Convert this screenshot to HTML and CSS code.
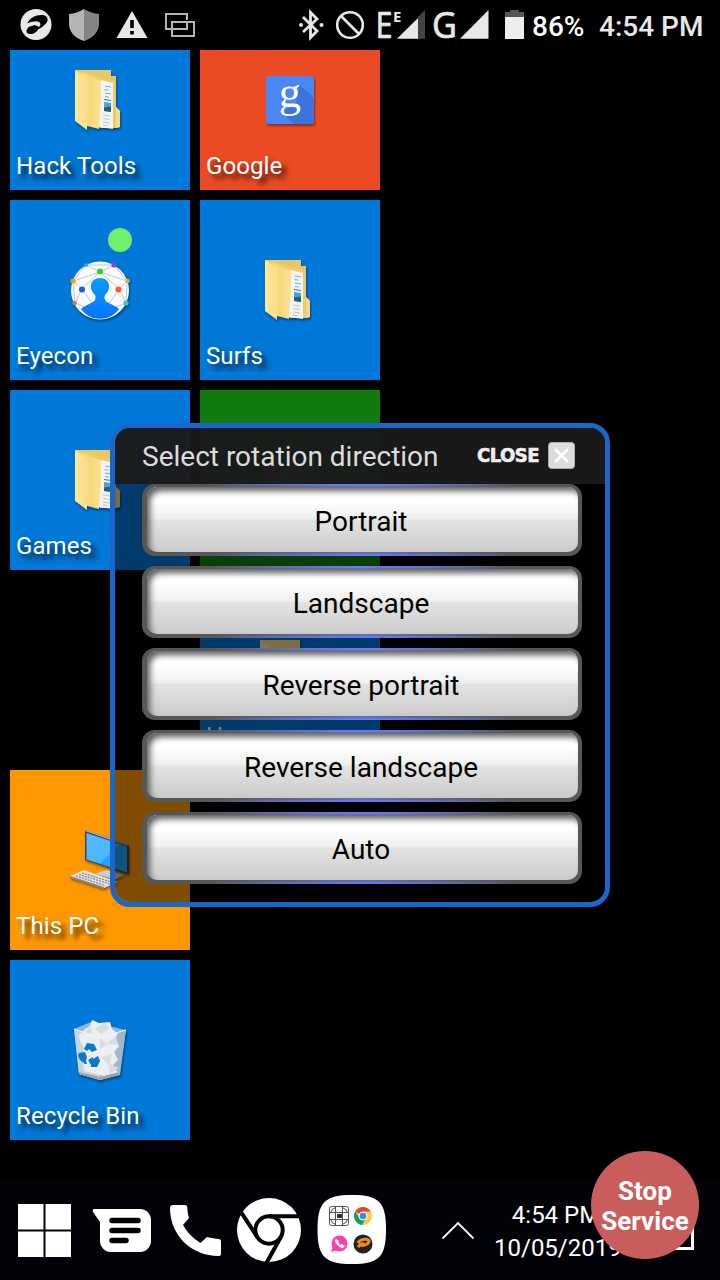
FILE: index.html
```html
<!doctype html>
<html lang="en">
<head>
    <meta charset="UTF-8">
    <meta name="viewport" content="width=device-width, initial-scale=1.0">
    <title>Launcher</title>
    <link rel="stylesheet" href="styles.css">
</head>
<body>

<!-- shared icons -->
<svg class="defs">
    <defs>
        <linearGradient id="fold" x1="0" x2="1"><stop offset="0" stop-color="#f7d97f"/><stop offset=".5" stop-color="#f6d87c"/><stop offset="1" stop-color="#ffe394"/></linearGradient>
        <linearGradient id="flap" x1="0" x2="1"><stop offset="0" stop-color="#ffe69a"/><stop offset="1" stop-color="#fbdd85"/></linearGradient>
        <linearGradient id="screen" x1="0" x2="1" y2="1"><stop offset="0" stop-color="#56bdff"/><stop offset=".55" stop-color="#4ab6ff"/><stop offset=".56" stop-color="#22a4fb"/><stop offset="1" stop-color="#2aa8fd"/></linearGradient>
        <linearGradient id="man" x2="0" y2="1"><stop offset="0" stop-color="#0a9cff"/><stop offset="1" stop-color="#0573fb"/></linearGradient>
        <symbol id="folder" viewBox="0 0 60 60">
            <path d="M5 0h36v6h5v31l4 4v16l-4 1H30z" fill="#edcb6d"/>
            <path d="M5 0h36v6h5v5L12 2z" fill="#e9c766"/>
            <path d="M46 37l4 4v16l-4 1z" fill="#f9da80"/>
            <path d="M31 10l12 3v46l-14-2z" fill="#f3f3f3"/>
            <path d="M35 16l6 1M34.500 19.500l4 .6M35 23l6 1M35 26.500l4 .6" stroke="#64b4e4" stroke-width="1"/>
            <path d="M34 29.500l7 1" stroke="#2277b8" stroke-width="1"/>
            <path d="M34 32l7 1v9l-7-1z" fill="#4ba3d4"/>
            <path d="M34 37.500l7-1V42l-7-1z" fill="#2b5f70"/>
            <path d="M33 45l7 1M33.500 48.500l6 1M33 52l7 1M33 55l5 .8" stroke="#c4c4c4" stroke-width="1"/>
            <path d="M12 2l19 9v25l-2 5v18l-16-4z" fill="url(#fold)"/>
            <path d="M5 0l13 9v30l-1 4v17L5 51z" fill="url(#flap)"/>
        </symbol>
    </defs>
</svg>

<div id="status">
    <svg class="st-left" width="180" height="34" viewBox="18 8 180 34">
        <circle cx="36" cy="24.500" r="15.500" fill="#e8e8e8"/>
        <path d="M27.500 23.500c2-6 9-9 15-8.500 7 1 6 7 2 10-4 4-8 5-10 5 2-2 6-3 6-6-1-4-8-3-13-.5z" fill="#000"/>
        <ellipse cx="32.500" cy="29.500" rx="6.500" ry="4" transform="rotate(-25 32.500 29.500)" fill="#000"/>
        <path d="M29 27c3-4 8-5 11-4 0 2-2 3-3 3-1-1-4-1-8 1z" fill="#e8e8e8"/>
        <path d="M84 9c-5 3-10 4.500-15 5v10c0 8 6 14 15 17z" fill="#b4b4b4"/>
        <path d="M84 9c5 3 10 4.500 15 5v10c0 8-6 14-15 17z" fill="#848484"/>
        <path d="M132 11l15.500 27h-31z" fill="#e8e8e8"/>
        <path d="M130.200 20h3.600v8h-3.600zM130.200 31h3.600v3.500h-3.600z" fill="#000"/>
        <path d="M174 29h-8V14h21v6M183 29h4v-7M172 22h22v14h-22zM174 29h9" fill="none" stroke="#b4b4b4" stroke-width="2"/>
    </svg>
    <svg class="st-right" width="228" height="50" viewBox="297 0 228 50">
        <path d="M303 17l14 14-6.500 6.500V12.500L317 19l-14 13" fill="none" stroke="#e8e8e8" stroke-width="2.800"/>
        <circle cx="301" cy="25" r="2" fill="#e8e8e8"/><circle cx="321.500" cy="25" r="2" fill="#e8e8e8"/>
        <circle cx="350" cy="25" r="12.800" fill="none" stroke="#e8e8e8" stroke-width="2.600"/>
        <path d="M341 16l18 18" stroke="#e8e8e8" stroke-width="2.600"/>
        <text x="375.500" y="38" class="net" textLength="17" lengthAdjust="spacingAndGlyphs">E</text>
        <text x="393" y="22" class="net-s">E</text>
        <path d="M418 18v20.800h-21z" fill="#e8e8e8"/><path d="M425 10v28.800h-7V17z" fill="#444"/>
        <text x="432" y="38" class="net" textLength="25" lengthAdjust="spacingAndGlyphs">G</text>
        <path d="M488.500 10v28.800H460z" fill="#e8e8e8"/>
        <path d="M505 17v-5h5v-2h9v2h5v5z" fill="#555"/><path d="M505 17h19v22h-19z" fill="#eee"/>
    </svg>
    <span class="battery">86%</span>
    <span class="time">4:54 PM</span>
</div>

<div id="desk">
    <div class="tile short">
        <svg class="icon"><use href="#folder"/></svg>
        <span>Hack Tools</span>
    </div>
    <div class="tile short red">
        <svg class="icon" viewBox="0 0 60 60">
            <rect x="6" y="6" width="48" height="48" rx="3" fill="#4a86f4"/>
            <path d="M40 15l14 13v26H34L23 43l13-11z" fill="#3d74dc"/>
            <text x="30" y="37" class="g">g</text>
        </svg>
        <span>Google</span>
    </div>
    <div class="tile">
        <i class="dot"></i>
        <svg class="icon" viewBox="0 0 60 60">
            <circle cx="30" cy="30.500" r="29" fill="#fafafc"/>
            <path d="M16 5h28M16 5L3 21M16 5l14 7M44 5L30 12M44 5l13 16M30 12L3 21M30 12l27 9M30 12L12 29M30 12l19 17M3 21l9 8M57 21l-8 8M12 29L5 43M12 29l14 20M49 29l7 14M49 29L36 48M5 43l10 4M56 43l-10 4M3 21l2 22M57 21l-1 22" fill="none" stroke="#bfc1cb" stroke-width=".9"/>
            <path d="M11 49c3-3 7-4 10-6 5-2 5-5 4-8-7-6-5-17 5-17s12 11 5 17c-1 3-1 6 4 8 3 2 7 3 10 6-9 13-29 13-38 0z" fill="url(#man)"/>
            <circle cx="16" cy="5" r="2" fill="#27a7e6"/><circle cx="44" cy="5" r="2.600" fill="#8248dc"/>
            <circle cx="30" cy="11.500" r="3" fill="#2bd52d"/><circle cx="3" cy="21" r="2.600" fill="#ff9500"/>
            <circle cx="57.500" cy="21" r="2.200" fill="#f5b81c"/><circle cx="12" cy="29.500" r="3" fill="#1560e0"/>
            <circle cx="48.500" cy="29.500" r="3" fill="#ff5530"/><circle cx="4.500" cy="43" r="2.200" fill="#c47f28"/>
            <circle cx="56" cy="43" r="2.600" fill="#3dc9c5"/>
        </svg>
        <span>Eyecon</span>
    </div>
    <div class="tile">
        <svg class="icon"><use href="#folder"/></svg>
        <span>Surfs</span>
    </div>
    <div class="tile">
        <svg class="icon"><use href="#folder"/></svg>
        <span>Games</span>
    </div>
    <div class="tile green">
        <svg class="icon" viewBox="0 0 60 60">
            <path d="M6 10l13 5v20H6z" fill="#b030b0"/>
            <path d="M19 23l30-13 5 1v24H19z" fill="#5577aa"/>
            <path d="M19 23l15-7 17-6" fill="none" stroke="#c98a5a" stroke-width="2"/>
        </svg>
    </div>
    <div class="tile empty"></div>
    <div class="tile">
        <svg class="icon" viewBox="0 0 60 60">
            <path d="M0 0h40v55H0z" fill="#ffdb7a"/><path d="M0 0l12 8v52L0 50z" fill="#ffe9ae"/>
        </svg>
        <span>H</span>
    </div>
    <div class="tile orange">
        <svg class="icon" viewBox="0 0 60 60">
            <path d="M25 44l11-4 18 5-10 5z" fill="#c9cdd1"/><path d="M25 44l19 5v2l-19-5z" fill="#777"/>
            <path d="M15 1l2-.6L59 15v28.500l-2 .5-42-14z" fill="#3d4650"/>
            <path d="M16.500 3L57 16.500v26L16.500 29.500z" fill="url(#screen)"/>
            <path d="M15 1l2-.6L59 15l-2 .6z" fill="#aeb8bf"/>
            <path d="M0 46l14-6 34 12-14 6z" fill="#e3e3e3"/><path d="M0 46l34 11v2L0 48z" fill="#858585"/>
            <path d="M6 46l29 9.500M9 44.500L40 54M12 43l31 9.500" stroke="#8a8a8a" stroke-width="1.300" stroke-dasharray="2 1"/>
        </svg>
        <span>This PC</span>
    </div>
    <div class="tile empty"></div>
    <div class="tile">
        <svg class="icon" viewBox="0 0 60 60">
            <path d="M4 9l17-7 35 8-7 45-19 5-21-6z" fill="#8fb8dc"/>
            <path d="M4 9l26 9v42L9 54z" fill="#c3d6e4"/>
            <path d="M30 18l26-8-6 45-20 5z" fill="#9fb9cc"/>
            <path d="M9 15l6-6 5-3 2-6 7 3 11-1 2 7 6 5-3 4 4 8-5 6 4 8-5 5 5 8-14 3-20-5-2-14 2-9-4-7z" fill="#eceff0"/>
            <path d="M30 18l7 6-7 5zM37 24l9-8 2 9zM32 38l10-5-3 12zM39 44l10 4-9 6zM11 14l10-7 1 7zM25 9l9-6 6 5-9 6z" fill="#d9dde0"/>
            <path d="M9 52l21 5 19-5v3l-19 5-21-6z" fill="#a4a4a6"/>
            <path d="M4 9l26 9 26-8" fill="none" stroke="#f5f8fa"/>
            <path d="M14 29l3-6 7 1 3 6-5 2-3-3-2 2zM9 33l6-1 2 5-1 4 1 3-2 0-5-4-2-4zM18 40l5-3v2l5-3 2 5-3 6-6 0v-2z" fill="#0b78cf"/>
        </svg>
        <span>Recycle Bin</span>
    </div>
</div>

<div id="bar">
    <svg class="launch" width="370" height="72" viewBox="18 1194 370 72">
        <path d="M18 1204h25.500v25.500H18zM45.500 1204H71v25.500H45.500zM18 1231.500h25.500v25.500H18zM45.500 1231.500H71v25.500H45.500z" fill="#fff"/>
        <path d="M94 1209h46a11 11 0 0 1 11 11v21a11 11 0 0 1-11 11h-29a11 11 0 0 1-11-11v-19l-7-10q-1-3 1-3z" fill="#fff"/>
        <path d="M112 1220.500h26M112 1230.500h26M112 1240.500h14" stroke="#020308" stroke-width="5.500" stroke-linecap="round"/>
        <path d="M173 1205h12q2 0 2.200 2 .2 6 1.800 11l-6 7q6 11 17.500 18l6.500-6q5.500 1.600 11.500 2 2.500 0 2.500 2v13q0 2-2 2c-28 0-49-21-49-48q0-3 3-3z" fill="#fff"/>
        <circle cx="269" cy="1230" r="32" fill="#fff"/>
        <g fill="none" stroke="#020308" stroke-width="4">
            <circle cx="269" cy="1230" r="13.700"/>
            <path d="M269 1216.300h33M257.200 1236.800L241 1212M280.800 1237L266.500 1263"/>
        </g>
        <path d="M352 1195c27 0 34 7 34 34.500s-7 34.500-34 34.500-34.500-7-34.500-34.500 7.500-34.500 34.500-34.500z" fill="#fff"/>
        <g fill="none" stroke="#555" stroke-width="1">
            <rect x="329.500" y="1206.500" width="19" height="19" rx="2"/>
            <path d="M335.500 1207v18M342.500 1207v18M330 1212.500h18M330 1219.500h18M331 1212q1-4 4-4M343 1208q4 1 4 4M331 1220q1 4 4 4M343 1224q4-1 4-4"/>
        </g>
        <path d="M337 1214h5v4h-5z" fill="#333"/>
        <circle cx="363" cy="1216" r="9" fill="#fdca45"/>
        <path d="M363 1216l-7.800-4.500A9 9 0 0 1 370.800 1211.500H363z" fill="#dc4a3d"/>
        <path d="M355.200 1211.500A9 9 0 0 0 362 1225l4-7-6.500 0z" fill="#12a05c"/>
        <circle cx="363" cy="1216" r="4" fill="#4484f0" stroke="#fff"/>
        <circle cx="339.500" cy="1243.500" r="8" fill="#ff3fae"/><path d="M331 1252l2-6 4 4z" fill="#ff3fae"/>
        <path d="M336 1239q-2 2 0 4 3 5 7 5l2-2-3-2-1 1q-2-1-3-3l1-1z" fill="#fff"/>
        <circle cx="363" cy="1244" r="9.500" fill="#222"/>
        <path d="M358 1243c2-4 10-5 11-2 0 3-5 5-8 4M358 1247q3-4 6-3" fill="none" stroke="#f68b1f" stroke-width="3"/>
    </svg>
    <svg class="up" width="34" height="20" viewBox="0 0 34 20"><path d="M1.500 17.500L17 2l15.500 15.500" fill="none" stroke="#fff" stroke-width="1.800"/></svg>
    <div class="clock">4:54 PM<br>10/05/2019</div>
    <svg class="note" width="30" height="36" viewBox="0 0 30 36"><path d="M1.500 2h25v24.500H9L1.500 29z" fill="none" stroke="#fff" stroke-width="3"/></svg>
</div>

<div id="dialog">
    <div class="head">
        <h1>Select rotation direction</h1>
        <b>CLOSE</b>
        <svg class="close" width="27" height="27" viewBox="0 0 27 27">
            <rect x=".5" y=".5" width="26" height="26" rx="3" fill="#dcdcdc" stroke="#aaa"/>
            <path d="M7 7l13 13M20 7L7 20" stroke="#fff" stroke-width="2.600"/>
        </svg>
    </div>
    <ul>
        <li><a href="javascript:;">Portrait</a></li>
        <li><a href="javascript:;">Landscape</a></li>
        <li><a href="javascript:;">Reverse portrait</a></li>
        <li><a href="javascript:;">Reverse landscape</a></li>
        <li><a href="javascript:;">Auto</a></li>
    </ul>
</div>

<div id="stop">Stop<br>Service</div>

</body>
</html>
```
FILE: styles.css
```css
*{
    margin: 0;
    padding: 0;
    box-sizing: border-box;
}
body,html{
    width: 100%;
    height: 100%;
    overflow: hidden;
}
body{
    display: flex;
    flex-direction: column;
    background: #000;
    color: #fff;
    font-family: Roboto, "Liberation Sans", sans-serif;
}
svg{
    display: block;
    flex: none;
}
.defs{
    position: absolute;
    width: 0;
    height: 0;
}

/* status bar */
#status{
    display: flex;
    align-items: center;
    height: 50px;
    padding: 0 0 0 18px;
    font-size: 28px;
    font-weight: 500;
    white-space: nowrap;
}
.st-right{
    margin-left: 99px;
}
.net{
    font: 37px "Noto Sans", sans-serif;
    fill: #e8e8e8;
    stroke: #e8e8e8;
    stroke-width: .6px;
}
.net-s{
    font: bold 15px "Noto Sans", sans-serif;
    fill: #e8e8e8;
}
#status .battery{
    margin: 2px 0 0 7px;
    width: 67px;
}
#status .time{
    margin-top: 2px;
    color: #e8e8e8;
}

/* tiles */
#desk{
    display: grid;
    grid-template-columns: 180px 180px;
    gap: 10px;
    padding: 0 10px;
    height: 1130px;
    align-content: start;
}
.tile{
    position: relative;
    display: flex;
    flex-direction: column;
    justify-content: space-between;
    height: 180px;
    padding: 60px 6px 9px;
    background: #0078d7;
}
.tile.short{
    height: 140px;
    padding-top: 20px;
}
.tile.red{
    background: #ea4b24;
}
.tile.green{
    background: #107c10;
}
.tile.orange{
    background: #ff9800;
}
.tile.empty{
    background: none;
}
.tile .icon{
    width: 60px;
    height: 60px;
    margin: 0 auto;
    overflow: visible;
    filter: drop-shadow(1px 2px 1px rgba(0,0,0,.4));
}
.tile span{
    font-size: 24px;
    line-height: 30px;
    letter-spacing: .1px;
    text-shadow: 5px 5px 5px rgba(0,0,0,.75);
}
.tile .dot{
    position: absolute;
    left: 98px;
    top: 28px;
    width: 24px;
    height: 24px;
    border-radius: 50%;
    background: #71f06b;
}
.g{
    font: 45px "Liberation Serif", serif;
    fill: #fff;
    text-anchor: middle;
}

/* task bar */
#bar{
    display: flex;
    align-items: flex-start;
    height: 100px;
    padding: 14px 0 0 18px;
    background: #020308;
}
#bar .up{
    margin: 27px 0 0 53px;
}
#bar .clock{
    width: 124px;
    margin: 5px 0 0 19px;
    font-size: 24px;
    line-height: 33px;
    text-align: center;
}
#bar .note{
    margin: 28px 0 0 48px;
}

/* rotation dialog */
#dialog{
    position: absolute;
    left: 110px;
    top: 423px;
    width: 500px;
    height: 484px;
    border: 5px solid #1b66ca;
    border-radius: 20px;
    background: rgba(0,0,0,.5);
    background-clip: padding-box;
    overflow: hidden;
}
#dialog .head{
    display: flex;
    align-items: center;
    height: 56px;
    padding-left: 27px;
    background: rgba(27,27,27,.93);
}
#dialog h1{
    width: 335px;
    font-size: 28px;
    font-weight: 400;
    color: #dcdcdc;
}
#dialog b{
    width: 71px;
    margin-top: -2px;
    font: bold 20px "DejaVu Sans Condensed", "DejaVu Sans", sans-serif;
    letter-spacing: -.5px;
    color: #eee;
    -webkit-text-stroke: .6px #eee;
}
#dialog .close{
    margin-top: -2px;
}
#dialog ul{
    display: grid;
    gap: 10px;
    padding: 0 23px 0 27px;
    list-style: none;
}
#dialog li{
    height: 72px;
    padding: 3px 4px 4px 5px;
    border-radius: 13px;
    background:
        linear-gradient(90deg, transparent 15%, #6478ff 50%, transparent 85%) 0 0 / 100% 2px no-repeat,
        linear-gradient(90deg, transparent 15%, #6478ff 50%, transparent 85%) 0 100% / 100% 2px no-repeat,
        linear-gradient(90deg, #575757 15%, #6670a8 50%, #575757 85%);
}
#dialog li a{
    display: block;
    height: 65px;
    border-radius: 10px;
    background: linear-gradient(#fff 0, #fff 22%, #efefef 49%, #e3e3e3 51%, #cbcbcb);
    box-shadow: inset 4px 5px 6px -1px #5c5c5c;
    color: #000;
    font-size: 28px;
    line-height: 69px;
    text-align: center;
    text-indent: -3px;
    text-decoration: none;
}

#stop{
    position: absolute;
    left: 591px;
    top: 1151px;
    width: 108px;
    height: 108px;
    padding-top: 25px;
    border-radius: 50%;
    background: #c85d5c;
    font-size: 26px;
    font-weight: 700;
    line-height: 30px;
    text-align: center;
}
```
